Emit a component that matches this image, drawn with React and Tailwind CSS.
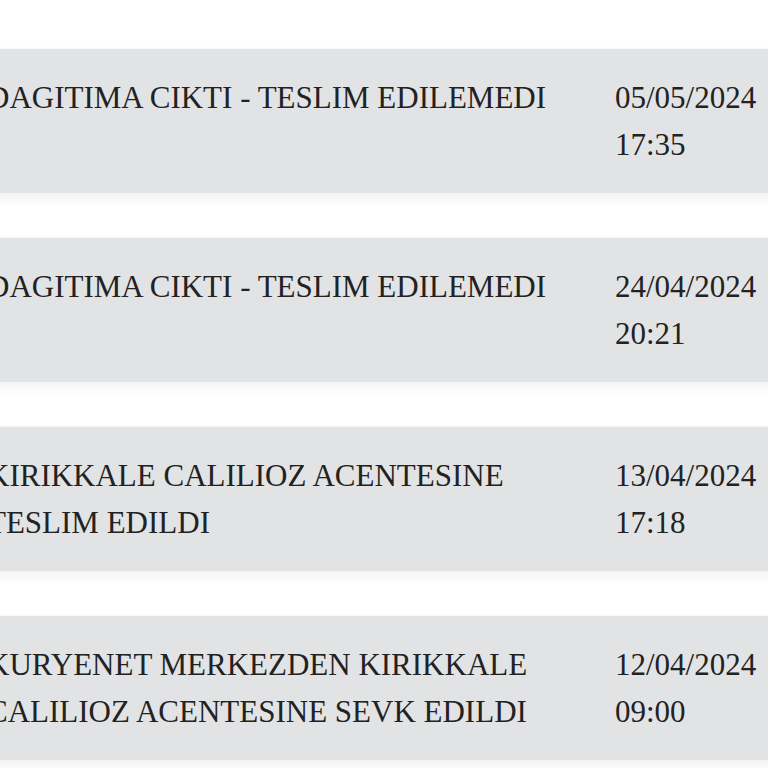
import React from 'react';

const events = [
  { text: 'DAGITIMA CIKTI - TESLIM EDILEMEDI', date: '05/05/2024', time: '17:35' },
  { text: 'DAGITIMA CIKTI - TESLIM EDILEMEDI', date: '24/04/2024', time: '20:21' },
  { text: 'KIRIKKALE CALILIOZ ACENTESINE TESLIM EDILDI', date: '13/04/2024', time: '17:18' },
  { text: 'KURYENET MERKEZDEN KIRIKKALE CALILIOZ ACENTESINE SEVK EDILDI', date: '12/04/2024', time: '09:00' },
];

const EventCard = ({ text, date, time }) => (
  <div className="bg-[#e2e3e5] shadow-[0_6px_10px_rgba(0,0,0,0.05),0_-1px_2px_rgba(0,0,0,0.04)] py-[25px] pl-[32px]">
    <div className="grid grid-cols-[600px_1fr] gap-[28px]">
      <p className="text-[#222]">{text}</p>
      <p className="text-[#222]">
        {date}
        <br />
        {time}
      </p>
    </div>
  </div>
);

export default function App() {
  return (
    <div
      className="w-[768px] h-[768px] overflow-hidden bg-white text-[31px] leading-[47px]"
      style={{ fontFamily: '"Liberation Serif", "Times New Roman", serif' }}
    >
      <div className="ml-[-45px] w-[860px] pt-[49px] flex flex-col gap-[45px]">
        {events.map((e, i) => (
          <EventCard key={i} {...e} />
        ))}
      </div>
    </div>
  );
}
